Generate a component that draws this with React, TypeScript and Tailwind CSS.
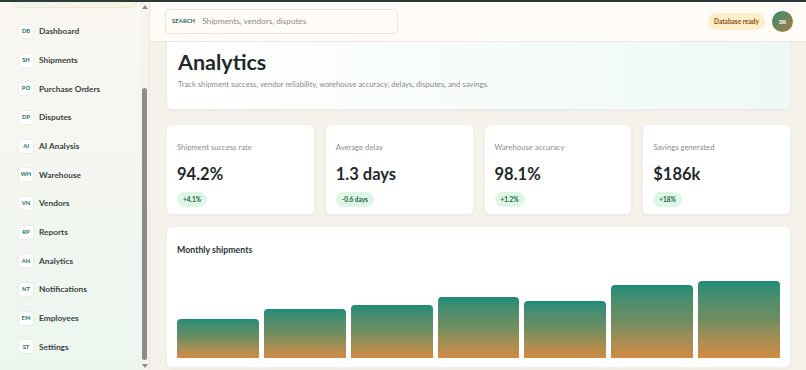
import React, { useLayoutEffect, useRef } from "react";

const nav = [
  ["DB", "Dashboard"],
  ["SH", "Shipments"],
  ["PO", "Purchase Orders"],
  ["DP", "Disputes"],
  ["AI", "AI Analysis"],
  ["WH", "Warehouse"],
  ["VN", "Vendors"],
  ["RP", "Reports"],
  ["AN", "Analytics"],
  ["NT", "Notifications"],
  ["EM", "Employees"],
  ["ST", "Settings"],
];

const stats = [
  ["Shipment success rate", "94.2%", "+4.1%"],
  ["Average delay", "1.3 days", "-0.6 days"],
  ["Warehouse accuracy", "98.1%", "+1.2%"],
  ["Savings generated", "$186k", "+18%"],
];

const bars = [39, 49, 53, 61, 57, 73, 77];

export default function App() {
  const sideRef = useRef<HTMLDivElement>(null);
  useLayoutEffect(() => {
    const el = sideRef.current;
    if (el) el.scrollTop = el.scrollHeight;
  }, []);

  return (
    <div
      className="w-[806px] h-[370px] overflow-hidden flex flex-col bg-[#f5f2ec]"
      style={{ fontFamily: "Lato, 'Open Sans', sans-serif" }}
    >
      <div className="h-[2px] bg-[#2b3a3a] shrink-0" />
      <div className="flex flex-1 min-h-0">
        {/* Sidebar */}
        <div className="relative w-[150px] shrink-0 border-r border-[#ebe7df] bg-gradient-to-b from-[#faf7f1] to-[#ecf6ef]">
          <div
            ref={sideRef}
            className="h-full overflow-y-auto [scrollbar-width:none] pr-[9px]"
          >
            <div className="pt-[12px] pb-[9px] pl-[12px] pr-[3px]">
              <div className="h-[97px] rounded-[6px] border border-[#efe9dc] bg-gradient-to-r from-[#eef6ef] to-[#fdf3e1]" />
              <div className="mt-[9px] flex flex-col">
                {nav.map(([code, label]) => (
                  <div key={code} className="h-[28.7px] flex items-center pl-[7px]">
                    <div className="w-[14px] h-[13px] rounded-[3px] bg-white shadow-[0_0_2px_rgba(0,0,0,0.12)] flex items-center justify-center text-[5.8px] font-bold text-[#17705f]">
                      {code}
                    </div>
                    <div className="ml-[6px] text-[8.3px] font-bold text-[#3a4545]">{label}</div>
                  </div>
                ))}
              </div>
            </div>
          </div>
          {/* scrollbar */}
          <div className="absolute right-0 top-0 bottom-0 w-[9px] bg-[#f3f2ee]/70">
            <div className="absolute left-1/2 -translate-x-1/2 top-[3px] w-0 h-0 border-l-[3px] border-r-[3px] border-b-[4px] border-l-transparent border-r-transparent border-b-[#8c8c8c]" />
            <div className="absolute left-[2px] top-[86px] w-[5px] h-[272px] rounded-full bg-[#8c8c8c]" />
            <div className="absolute left-1/2 -translate-x-1/2 bottom-[2px] w-0 h-0 border-l-[3px] border-r-[3px] border-t-[4px] border-l-transparent border-r-transparent border-t-[#8c8c8c]" />
          </div>
        </div>

        {/* Main */}
        <div className="flex-1 min-w-0 flex flex-col">
          <div className="h-[40px] shrink-0 bg-[#fffcf7] border-b border-[#ece8e0] flex items-center pl-[15px] pr-[13px]">
            <div className="w-[233px] h-[25px] rounded-[4px] border border-[#ece6da] bg-[#fffcf7] flex items-center pl-[6px]">
              <span className="text-[5.8px] font-bold text-[#1c6b5c] tracking-[0.02em]">SEARCH</span>
              <span className="ml-[7px] text-[8.2px] text-[#8b8b8b]">Shipments, vendors, disputes</span>
            </div>
            <div className="ml-auto flex items-center gap-[7px]">
              <div className="h-[17px] px-[6px] rounded-full bg-[#fcefc7] flex items-center text-[6.5px] font-bold text-[#8a4b1a]">
                Database ready
              </div>
              <div className="w-[21px] h-[21px] rounded-full bg-gradient-to-br from-[#0f8a70] to-[#a07c3c] flex items-center justify-center text-[6px] font-bold text-white">
                SR
              </div>
            </div>
          </div>

          <div className="flex-1 min-h-0 overflow-hidden pl-[16px] pr-[15px]">
            <div className="-mt-[12px] rounded-[6px] border border-[#efece6] bg-gradient-to-r from-[#ffffff] to-[#eef8f7] pl-[11px] pt-[18px] pb-[20px] shadow-[0_1px_2px_rgba(0,0,0,0.04)]">
              <div className="text-[21.5px] leading-[26px] font-bold text-[#1f2a2a]">Analytics</div>
              <div className="mt-[4px] text-[7.7px] leading-[10px] text-[#8a8a8a]">
                Track shipment success, vendor reliability, warehouse accuracy, delays, disputes, and savings.
              </div>
            </div>

            <div className="mt-[14px] grid grid-cols-4 gap-[10px]">
              {stats.map(([label, value, delta]) => (
                <div
                  key={label}
                  className="h-[91px] rounded-[6px] bg-white shadow-[0_1px_3px_rgba(0,0,0,0.05)] border border-[#f1eee8] pl-[10px] pt-[17px]"
                >
                  <div className="text-[7.7px] leading-[10px] text-[#8b8b8b]">{label}</div>
                  <div className="mt-[12px] text-[16.5px] leading-[20px] font-bold text-[#1f2a2a]">{value}</div>
                  <div className="mt-[6px] inline-flex h-[15px] items-center px-[6px] rounded-full bg-[#dcf7e6] text-[6.5px] font-bold text-[#1f5f3a]">
                    {delta}
                  </div>
                </div>
              ))}
            </div>

            <div className="mt-[11px] h-[142px] rounded-[6px] bg-white shadow-[0_1px_3px_rgba(0,0,0,0.05)] border border-[#f1eee8] px-[10px] pt-[17px] pb-[9px] flex flex-col">
              <div className="text-[8.8px] leading-[12px] font-bold text-[#2a3535]">Monthly shipments</div>
              <div className="flex-1 flex items-end gap-[5px]">
                {bars.map((h, i) => (
                  <div
                    key={i}
                    className="flex-1 rounded-t-[4px] bg-gradient-to-b from-[#1a8c78] via-[#6f8e60] to-[#d38a43]"
                    style={{ height: `${h}px` }}
                  />
                ))}
              </div>
            </div>
          </div>
        </div>
      </div>
    </div>
  );
}
